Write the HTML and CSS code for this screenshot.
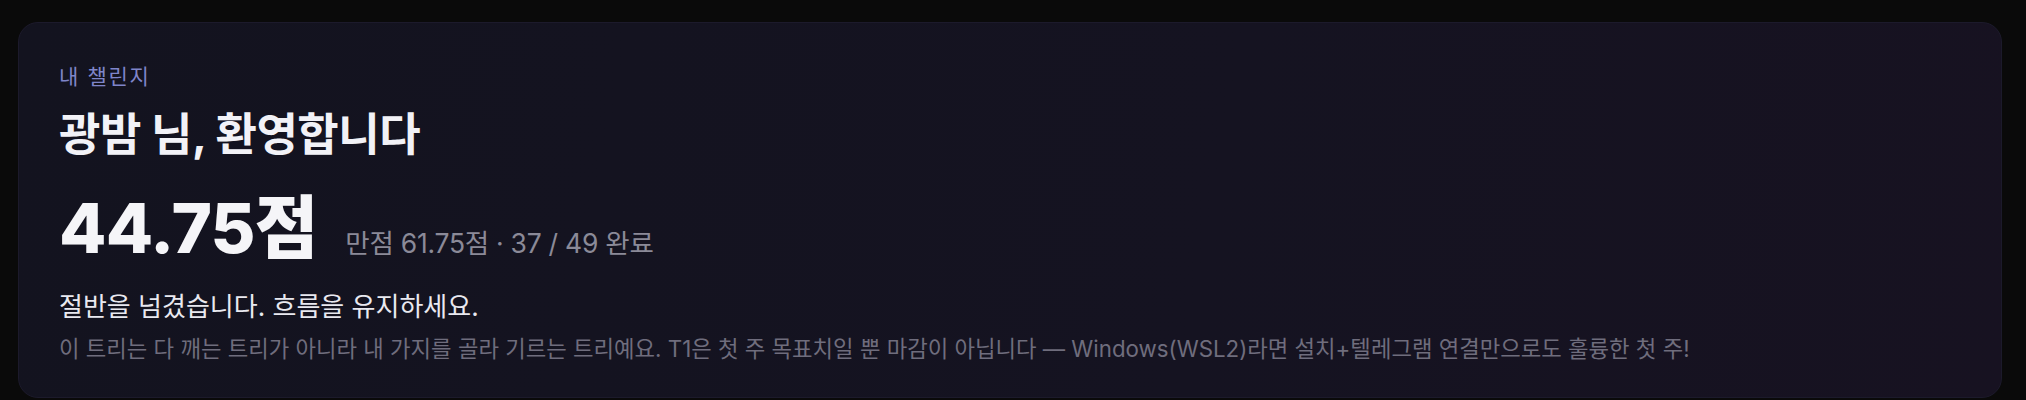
FILE: index.html
```html
<!DOCTYPE html>
<html lang="ko">
<head>
<meta charset="utf-8">
<link rel="stylesheet" href="styles.css">
</head>
<body>
<section class="card">
  <div class="eyebrow">내 챌린지</div>
  <h1 class="title">광밤 님, 환영합니다</h1>
  <div class="score-row">
    <span class="score">44.75점</span>
    <span class="meta">만점 61.75점 · 37 / 49 완료</span>
  </div>
  <p class="message">절반을 넘겼습니다. 흐름을 유지하세요.</p>
  <p class="note">이 트리는 다 깨는 트리가 아니라 내 가지를 골라 기르는 트리예요. T1은 첫 주 목표치일 뿐 마감이 아닙니다 — Windows(WSL2)라면 설치+텔레그램 연결만으로도 훌륭한 첫 주!</p>
</section>
</body>
</html>
```

FILE: styles.css
```css
html, body {
  margin: 0;
  background: #0a0a0a;
}
body {
  padding: 22px 24px 0 18px;
  font-family: Inter, "Noto Sans CJK KR", sans-serif;
  height: 400px;
  box-sizing: border-box;
  overflow: hidden;
}
.card {
  box-sizing: border-box;
  height: 376px;
  border-radius: 20px;
  border: 1px solid #1c1a2b;
  background: linear-gradient(100deg, #13131f 0%, #151321 60%, #171221 100%);
  padding: 40px 40px;
}
.eyebrow {
  font-size: 21px;
  line-height: 28px;
  color: #7f85c9;
  letter-spacing: 0.08em;
}
.title {
  margin: 17px 0 0;
  font-size: 45px;
  line-height: 54px;
  font-weight: 700;
  color: #f2f2f7;
  letter-spacing: -0.01em;
}
.score-row {
  display: flex;
  align-items: baseline;
  gap: 28px;
  margin-top: 28px;
}
.score {
  font-size: 69px;
  line-height: 76px;
  font-weight: 800;
  color: #f5f5f8;
  letter-spacing: -0.012em;
}
.meta {
  font-size: 26.5px;
  color: #8b8a98;
  letter-spacing: -0.01em;
}
.message {
  margin: 24px 0 0;
  font-size: 26px;
  line-height: 34px;
  color: #e9e9f0;
}
.note {
  margin: 9px 0 0;
  font-size: 22.3px;
  line-height: 32px;
  color: #6f6d7d;
}
```
